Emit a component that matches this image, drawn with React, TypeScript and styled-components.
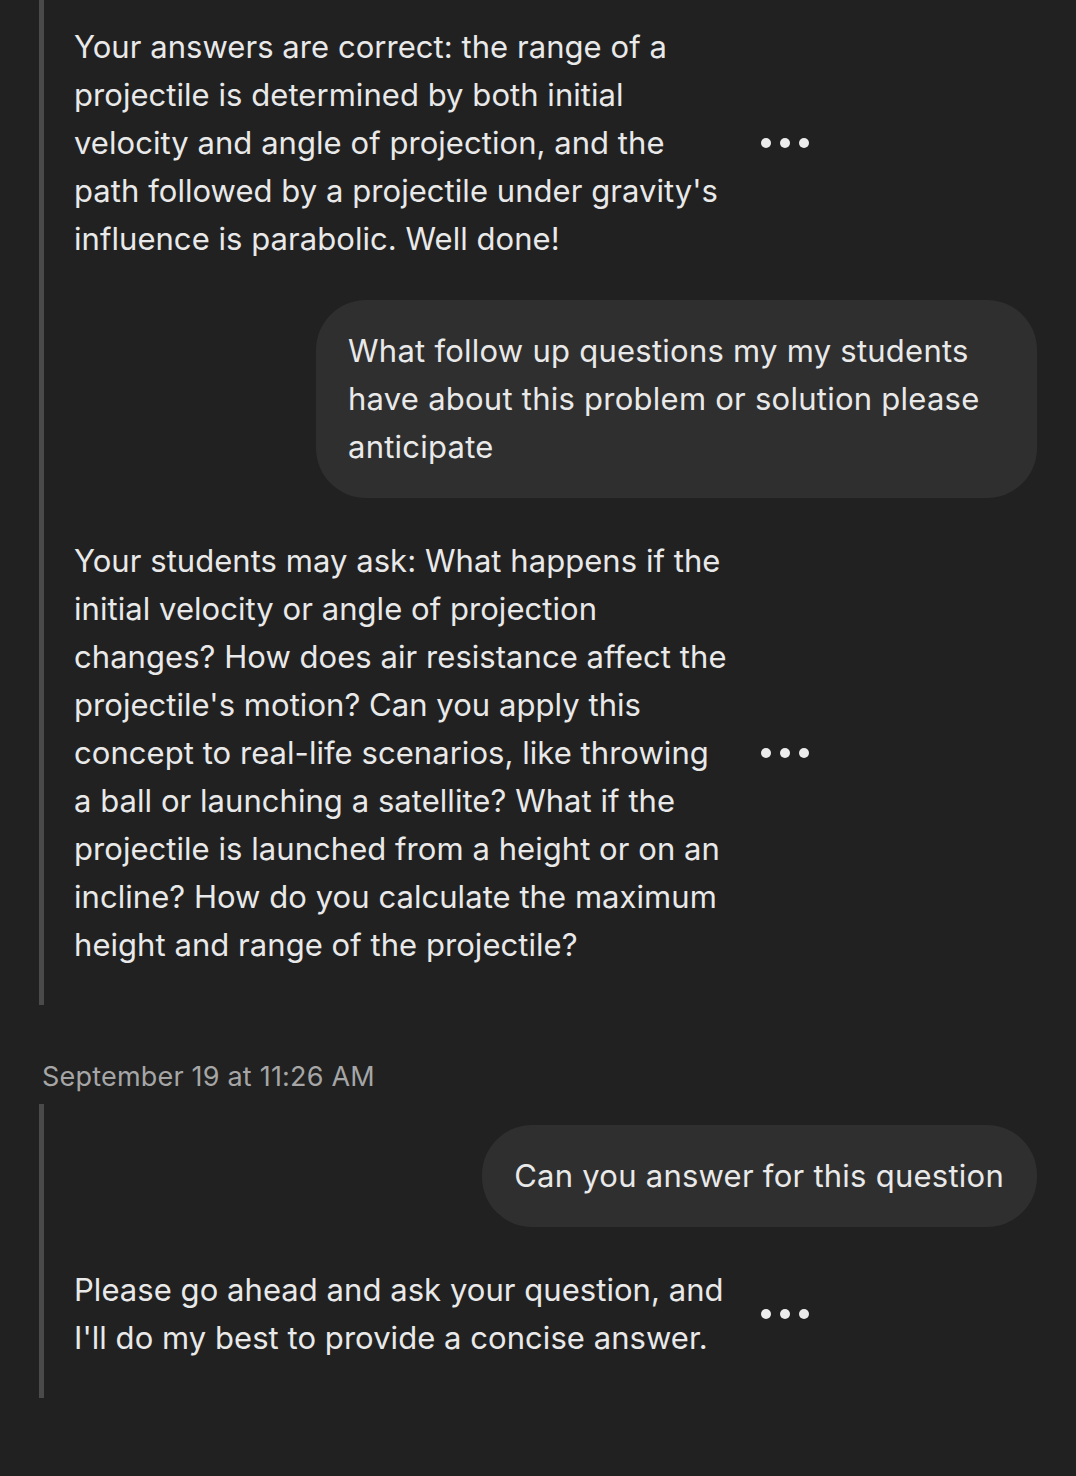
import React from "react";
import styled, { createGlobalStyle } from "styled-components";

const GlobalStyle = createGlobalStyle`
  html, body {
    margin: 0;
    padding: 0;
    background: #212121;
  }
  body {
    font-family: Inter, "Noto Sans", "Liberation Sans", sans-serif;
    color: #e9e9e9;
    -webkit-font-smoothing: antialiased;
  }
`;

const Page = styled.div`
  width: 1076px;
  min-height: 1476px;
  box-sizing: border-box;
  padding: 0 39px;
  background: #212121;
  display: flex;
  flex-direction: column;
`;

const Thread = styled.section<{ $top: number }>`
  border-left: 5px solid #4a4a4a;
  padding: ${(p) => p.$top}px 0 36px 30px;
  display: flex;
  flex-direction: column;
`;

const BotRow = styled.div<{ $gap?: number }>`
  display: flex;
  align-items: center;
  margin-top: ${(p) => p.$gap ?? 0}px;
`;

const BotText = styled.p`
  margin: 0;
  width: 661px;
  font-size: 31px;
  line-height: 48px;
  letter-spacing: 0.05px;
  white-space: pre-line;
`;

const Dots = styled.div`
  display: flex;
  gap: 9px;
  margin-left: 26px;
`;

const Dot = styled.span`
  width: 10px;
  height: 10px;
  border-radius: 50%;
  background: #ececec;
`;

const UserRow = styled.div<{ $gap: number }>`
  display: flex;
  justify-content: flex-end;
  margin-top: ${(p) => p.$gap}px;
`;

const Bubble = styled.div<{ $wide?: boolean }>`
  box-sizing: border-box;
  width: ${(p) => (p.$wide ? "721px" : "auto")};
  max-width: 721px;
  background: #2f2f2f;
  border-radius: 50px;
  padding: 27px 33px 27px 32px;
  font-size: 31px;
  line-height: 48px;
  letter-spacing: 0.25px;
  white-space: pre-line;
`;

const Timestamp = styled.div`
  margin: 54px 0 9px 3px;
  font-size: 27px;
  line-height: 36px;
  letter-spacing: 0.2px;
  color: #a6a6a6;
`;

const MoreDots = () => (
  <Dots>
    <Dot />
    <Dot />
    <Dot />
  </Dots>
);

const BotMessage = ({ text, gap }: { text: string; gap?: number }) => (
  <BotRow $gap={gap}>
    <BotText>{text}</BotText>
    <MoreDots />
  </BotRow>
);

export default function App() {
  return (
    <>
      <GlobalStyle />
      <Page>
        <Thread $top={23}>
          <BotMessage
            text={
              "Your answers are correct: the range of a\nprojectile is determined by both initial\nvelocity and angle of projection, and the\npath followed by a projectile under gravity's\ninfluence is parabolic. Well done!"
            }
          />
          <UserRow $gap={37}>
            <Bubble $wide>
              {
                "What follow up questions my my students\nhave about this problem or solution please\nanticipate"
              }
            </Bubble>
          </UserRow>
          <BotMessage
            gap={39}
            text={
              "Your students may ask: What happens if the\ninitial velocity or angle of projection\nchanges? How does air resistance affect the\nprojectile's motion? Can you apply this\nconcept to real-life scenarios, like throwing\na ball or launching a satellite? What if the\nprojectile is launched from a height or on an\nincline? How do you calculate the maximum\nheight and range of the projectile?"
            }
          />
        </Thread>
        <Timestamp>September 19 at 11:26 AM</Timestamp>
        <Thread $top={21}>
          <UserRow $gap={0}>
            <Bubble>Can you answer for this question</Bubble>
          </UserRow>
          <BotMessage
            gap={39}
            text={
              "Please go ahead and ask your question, and\nI'll do my best to provide a concise answer."
            }
          />
        </Thread>
      </Page>
    </>
  );
}
